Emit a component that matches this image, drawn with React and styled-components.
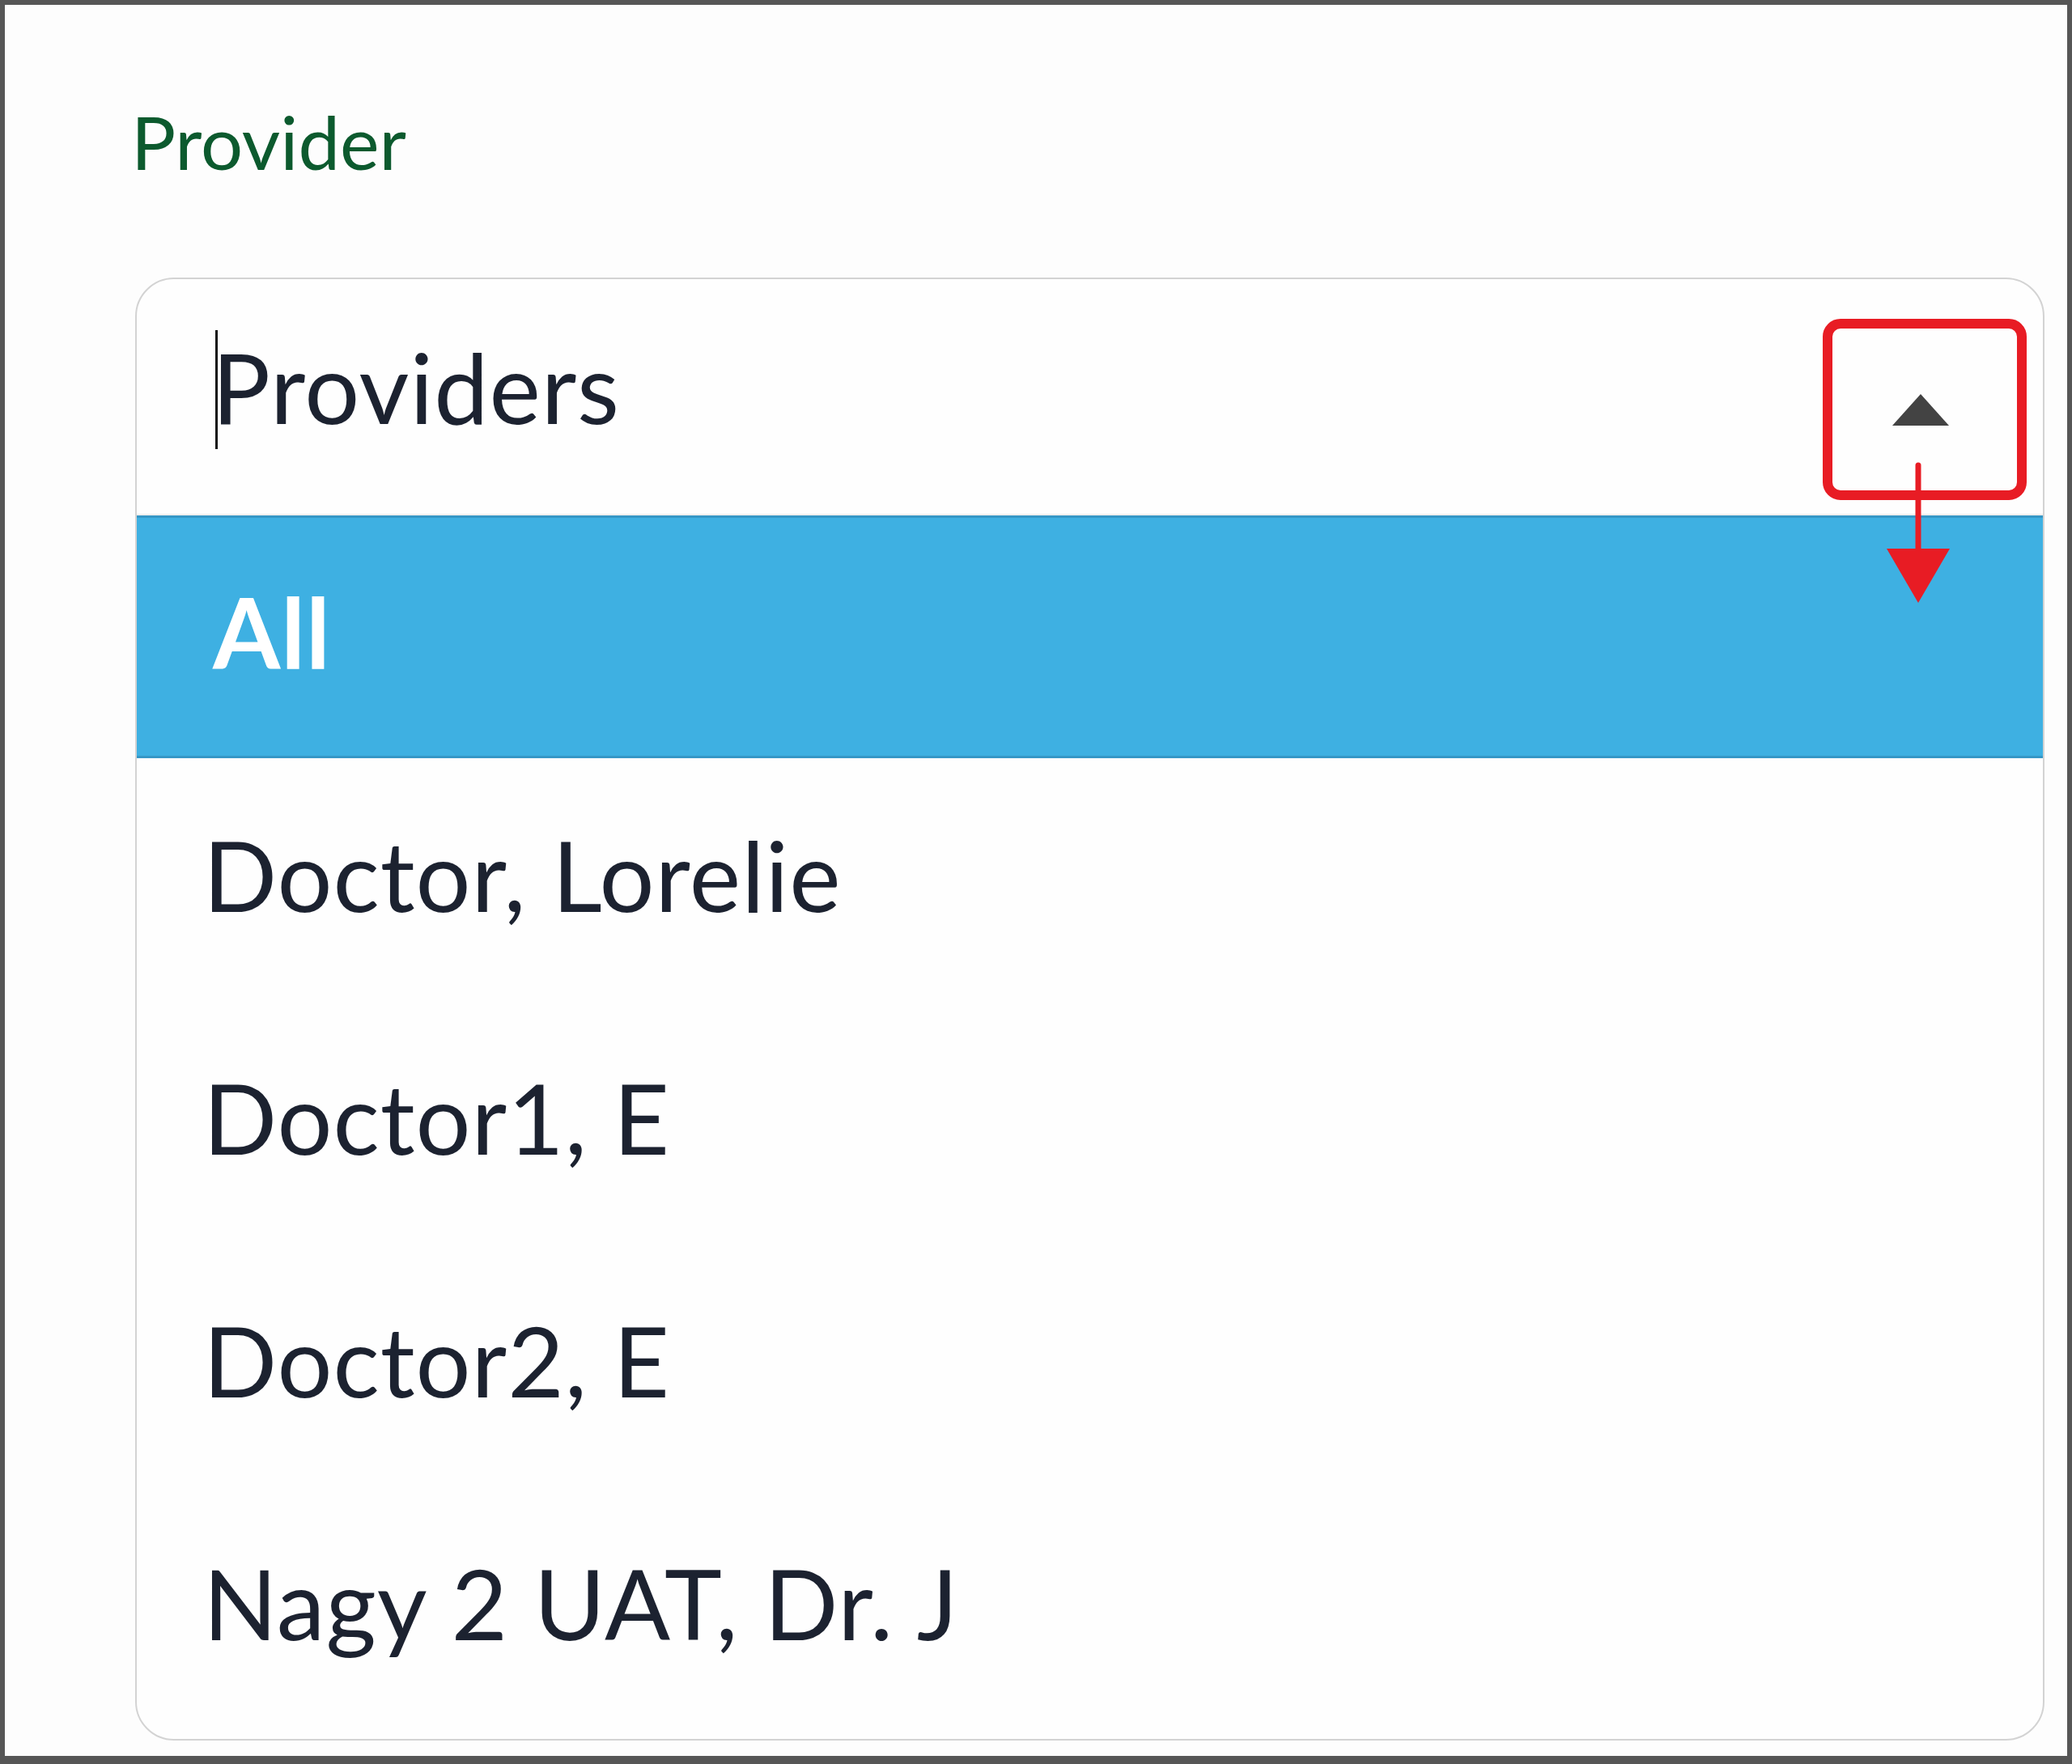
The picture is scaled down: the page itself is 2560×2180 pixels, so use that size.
import React from 'react';
import styled, { createGlobalStyle } from 'styled-components';

const GlobalStyle = createGlobalStyle`
  html, body {
    margin: 0;
    padding: 0;
    background: #fdfdfd;
  }
  body {
    font-family: Lato, "Liberation Sans", sans-serif;
  }
`;

const Frame = styled.div`
  position: relative;
  width: 2560px;
  height: 2180px;
  box-sizing: border-box;
  border: 6px solid #565656;
  border-bottom-width: 10px;
  background: #fdfdfd;
  padding: 123px 28px 0 161px;
`;

const Label = styled.div`
  font-size: 92px;
  line-height: 1;
  color: #0c5a2e;
  margin-left: -5px;
`;

const Select = styled.div`
  margin-top: 122px;
  width: 2359px;
  box-sizing: border-box;
  border: 2px solid #d3d3d3;
  border-radius: 48px;
  background: #fefefe;
  overflow: hidden;
  padding-bottom: 12px;
`;

const InputRow = styled.div`
  display: flex;
  align-items: flex-start;
  height: 292px;
  box-sizing: border-box;
  padding: 63px 116px 0 97px;
  border-bottom: 2px solid #eeeeee;
`;

const Caret = styled.span`
  width: 3px;
  height: 147px;
  background: #111;
  flex: none;
`;

const InputText = styled.span`
  margin: 10px 0 0 -7px;
  font-size: 120px;
  line-height: 1;
  letter-spacing: 1px;
  color: #1c2230;
  flex: 1;
`;

const ToggleArrow = styled.span`
  margin-top: 79px;
  width: 0;
  height: 0;
  border-left: 35px solid transparent;
  border-right: 35px solid transparent;
  border-bottom: 39px solid #434343;
`;

const Options = styled.ul`
  list-style: none;
  margin: 0;
  padding: 0;
`;

const Option = styled.li`
  height: 300px;
  box-sizing: border-box;
  padding: 84px 0 0 ${p => (p.$selected ? '94px' : '82px')};
  font-size: 120px;
  line-height: 1;
  letter-spacing: 1px;
  color: ${p => (p.$selected ? '#ffffff' : '#1c2230')};
  font-weight: ${p => (p.$selected ? 700 : 400)};
  background: ${p => (p.$selected ? '#3eb0e2' : 'transparent')};
  box-shadow: ${p =>
    p.$selected ? 'inset 0 3px 0 #3597c6, inset 0 -3px 0 #3597c6' : 'none'};
`;

const Callout = styled.div`
  position: absolute;
  left: 2246px;
  top: 388px;
  width: 252px;
  height: 224px;
  box-sizing: border-box;
  border: 12px solid #e81c24;
  border-radius: 22px;
`;

const CalloutArrow = styled.svg`
  position: absolute;
  left: 2324px;
  top: 565px;
`;

const providers = ['Doctor, Lorelie', 'Doctor1, E', 'Doctor2, E', 'Nagy 2 UAT, Dr. J'];

export default function App() {
  return (
    <>
      <GlobalStyle />
      <Frame>
        <Label>Provider</Label>
        <Select>
          <InputRow>
            <Caret />
            <InputText>Providers</InputText>
            <ToggleArrow />
          </InputRow>
          <Options>
            <Option $selected>All</Option>
            {providers.map(name => (
              <Option key={name}>{name}</Option>
            ))}
          </Options>
        </Select>
        <Callout />
        <CalloutArrow width="80" height="180" viewBox="0 0 80 180">
          <line x1="40" y1="4" x2="40" y2="115" stroke="#e81c24" strokeWidth="7" strokeLinecap="round" />
          <polygon points="1,107 79,107 40,174" fill="#e81c24" />
        </CalloutArrow>
      </Frame>
    </>
  );
}
